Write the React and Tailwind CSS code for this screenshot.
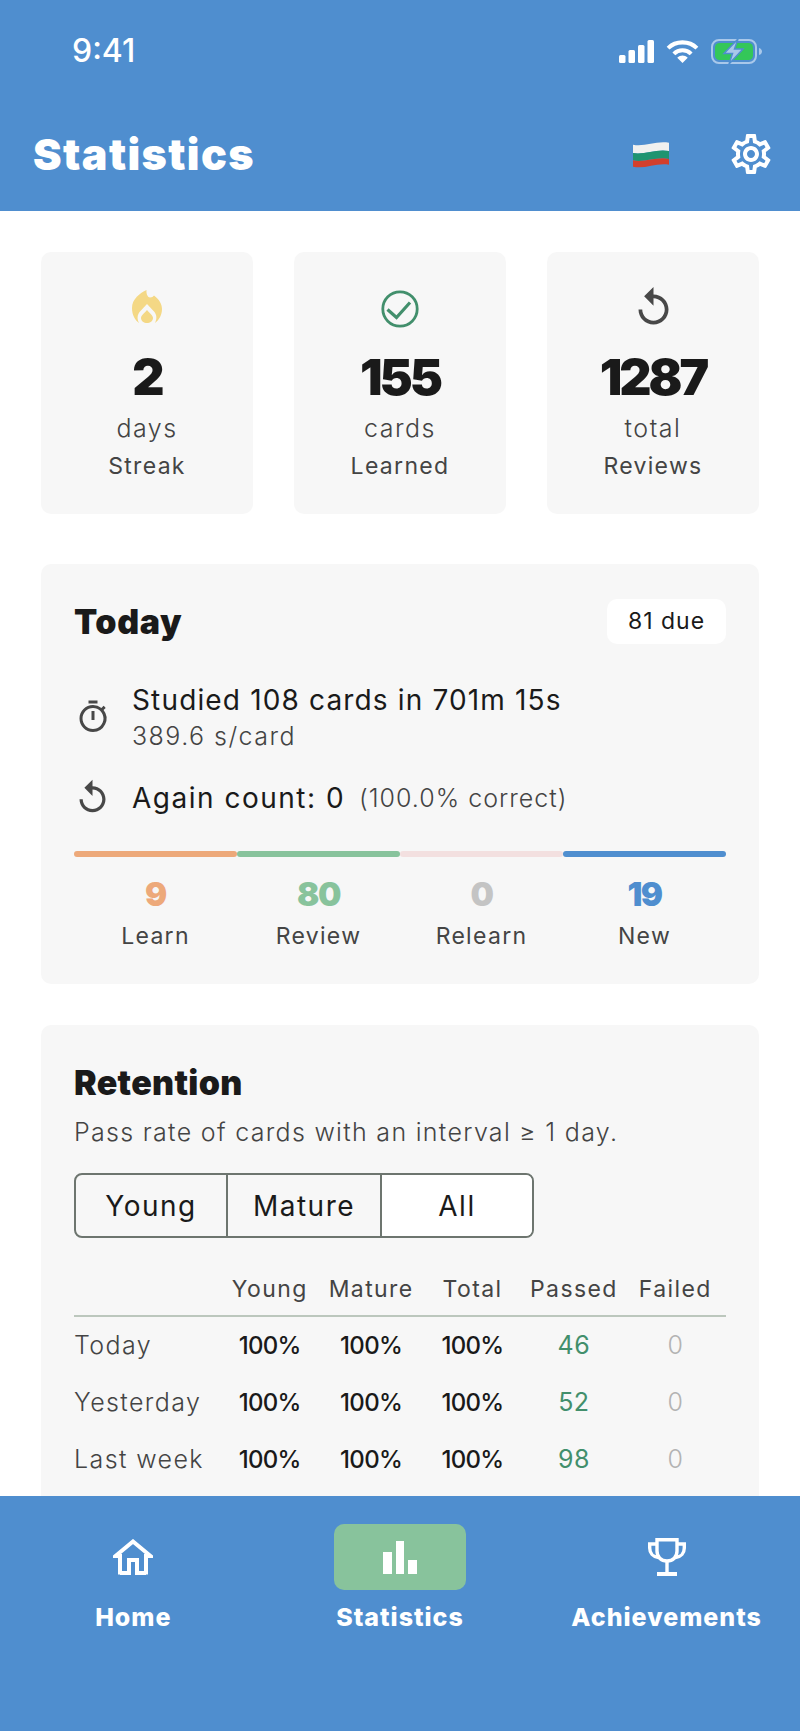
import { MdOutlineSettings, MdOutlineTimer, MdReplay } from 'react-icons/md';

const font = { fontFamily: 'Inter, "Noto Sans", sans-serif' };

const FlameIcon = () => (
  <svg className="-translate-y-[3px]" width="30" height="33" viewBox="0 0 30 33" fill="#f4d885">
    <path d="M14.5 0C14 4 16 7.5 18 7.5C20 7.5 21 6.5 22 5.5C27 9 30 14 30 19C30 25 27 30 23 33C25 29 25 25 22 21.5L15 14L8 21.5C5 25 5 29 7 33C3 30 0 25 0 18C0 9 8 3 14.5 0Z" />
    <path d="M15 20C17 23 21 25 21 28C21 31 18 33 15 33C12 33 9 31 9 28C9 25 13 23 15 20Z" />
  </svg>
);

const CheckIcon = () => (
  <svg width="38" height="38" viewBox="0 0 38 38" fill="none" stroke="#428f6c">
    <circle cx="19" cy="19" r="17.2" strokeWidth="2.8" />
    <path d="M6.5 19.5L15.5 27.5L29 12.5" strokeWidth="3.2" />
  </svg>
);

const SignalIcon = () => (
  <svg width="35" height="23" viewBox="0 0 35 23" fill="#fff">
    <rect x="0" y="15" width="6.5" height="8" rx="1.5" />
    <rect x="9.5" y="10" width="6.5" height="13" rx="1.5" />
    <rect x="19" y="5" width="6.5" height="18" rx="1.5" />
    <rect x="28.5" y="0" width="6.5" height="23" rx="1.5" />
  </svg>
);

const WifiIcon = () => (
  <svg width="33" height="24" viewBox="0 0 34 25" fill="none" stroke="#fff" strokeWidth="4.2">
    <path d="M2 9.5C10 1.5 24 1.5 32 9.5" />
    <path d="M8 15.5C13 10.5 21 10.5 26 15.5" />
    <path d="M11.5 19.5L17 25L22.5 19.5C19 16.5 15 16.5 11.5 19.5Z" fill="#fff" stroke="none" />
  </svg>
);

const BatteryIcon = () => (
  <svg width="52" height="25" viewBox="0 0 52 25">
    <rect x="1" y="1" width="44" height="23" rx="7" fill="none" stroke="#a9c8ea" strokeWidth="2" />
    <rect x="4" y="4" width="38" height="17" rx="4.5" fill="#34c759" />
    <path d="M48 9C50 9.5 51 11 51 12.5C51 14 50 15.5 48 16Z" fill="#a9c8ea" />
    <path d="M27 0L13 14.5H21.5L18 25L32 10H23.5Z" fill="#a9c8ea" stroke="#4f8ecf" strokeWidth="1.5" />
  </svg>
);

const FlagIcon = () => (
  <svg width="36" height="27" viewBox="0 0 37 27">
    <path d="M0 3.5C12 6 24 -1 37 1.5V10C24 7.5 12 14 0 12Z" fill="#f1f1ef" />
    <path d="M0 12C12 14 24 7.5 37 10V18C24 15.5 12 22 0 19.5Z" fill="#1f9470" />
    <path d="M0 19.5C12 22 24 15.5 37 18V24C24 21.5 12 29 0 26Z" fill="#d33f2c" />
  </svg>
);

const HomeIcon = () => (
  <svg width="40" height="36" viewBox="0 0 40 36" fill="none" stroke="#fff" strokeWidth="4">
    <path d="M7 34H16V21H24V34H33" />
    <path d="M7 35.5V17H2.5L20 2.5L37.5 17H33V35.5" />
  </svg>
);

const ChartIcon = () => (
  <svg width="34" height="33" viewBox="0 0 34 33" fill="#fff">
    <rect x="0" y="11" width="9" height="22" />
    <rect x="13" y="0" width="8" height="33" />
    <rect x="25" y="19" width="9" height="14" />
  </svg>
);

const TrophyIcon = () => (
  <svg width="38" height="38" viewBox="0 0 38 38" fill="none" stroke="#fff" strokeWidth="3.4">
    <path d="M9 1.7H29V13C29 19 25 23 19 23C13 23 9 19 9 13Z" />
    <path d="M9 6H1.7V10C1.7 15 5 19 10.5 19.5" />
    <path d="M29 6H36.3V10C36.3 15 33 19 27.5 19.5" />
    <path d="M19 23V35" />
    <path d="M9 36H29" strokeWidth="4" />
  </svg>
);

const stats = [
  { icon: <FlameIcon />, value: '2', unit: 'days', label: 'Streak' },
  { icon: <CheckIcon />, value: '155', unit: 'cards', label: 'Learned' },
  { icon: <MdReplay size={45} color="#484848" className="-translate-y-[2px]" />, value: '1287', unit: 'total', label: 'Reviews' },
];

const counts = [
  { value: '9', label: 'Learn', text: 'text-[#eda97a]', bar: 'bg-[#eda97a]' },
  { value: '80', label: 'Review', text: 'text-[#88c39c]', bar: 'bg-[#88c39c]' },
  { value: '0', label: 'Relearn', text: 'text-[#c4c4c4]', bar: 'bg-[#f3e0e0]' },
  { value: '19', label: 'New', text: 'text-[#4f8ecf]', bar: 'bg-[#4f8ecf]' },
];

const rows = [
  { label: 'Today', passed: '46' },
  { label: 'Yesterday', passed: '52' },
  { label: 'Last week', passed: '98' },
];

const App = () => {
  return (
    <div style={font} className="w-[800px] h-[1731px] flex flex-col overflow-hidden bg-white text-[#1a1a1a]">
      <header className="bg-[#4f8ecf] h-[211px] shrink-0 text-white">
        <div className="flex items-center justify-between h-[102px] pl-[72px] pr-[37px]">
          <span className="text-[32px] font-medium">9:41</span>
          <div className="flex items-center gap-[12px]">
            <SignalIcon />
            <WifiIcon />
            <BatteryIcon />
          </div>
        </div>
        <div className="flex items-center justify-between pl-[33px] pr-[25px] h-[54px] mt-[25px]">
          <h1 className="text-[43px] font-black tracking-[1.4px]">Statistics</h1>
          <div className="flex items-center gap-[58px]">
            <FlagIcon />
            <MdOutlineSettings size={48} color="#fff" />
          </div>
        </div>
      </header>

      <main className="flex-1 overflow-hidden px-[41px] pt-[41px]">
        <div className="grid grid-cols-3 gap-[41px]">
          {stats.map((stat) => (
            <div key={stat.label} className="bg-[#f7f7f7] rounded-[10px] h-[262px] flex flex-col items-center pt-[34px]">
              <div className="h-[46px] flex items-center justify-center">{stat.icon}</div>
              <div className="text-[50px] leading-[60px] font-black tracking-[-3px] mt-[15px]">{stat.value}</div>
              <div className="text-[25px] leading-[34px] font-light tracking-[1.5px] text-[#444] mt-[4px]">{stat.unit}</div>
              <div className="text-[23px] leading-[30px] tracking-[1.3px] text-[#444] mt-[6px]">{stat.label}</div>
            </div>
          ))}
        </div>

        <section className="bg-[#f7f7f7] rounded-[10px] h-[420px] mt-[50px] px-[33px] pt-[32px]">
          <div className="flex items-center justify-between">
            <h2 className="text-[34px] font-black tracking-[0.6px]">Today</h2>
            <span className="bg-white rounded-[10px] w-[119px] h-[45px] flex items-center justify-center text-[23px] tracking-[1px]">81 due</span>
          </div>
          <div className="flex items-center gap-[21px] mt-[34px]">
            <MdOutlineTimer size={36} color="#484848" className="ml-[1px] shrink-0" />
            <div>
              <div className="text-[28px] leading-[38px] tracking-[1.15px]">Studied 108 cards in 701m 15s</div>
              <div className="text-[25px] leading-[34px] font-light tracking-[1.45px] text-[#444]">389.6 s/card</div>
            </div>
          </div>
          <div className="flex items-center gap-[14px] mt-[25px]">
            <MdReplay size={39} color="#484848" className="-ml-[1px] shrink-0" />
            <div className="flex items-center gap-[14px] ml-[6px]">
              <span className="text-[28px] leading-[38px] tracking-[1.5px]">Again count: 0</span>
              <span className="text-[25px] leading-[34px] font-light tracking-[1px] text-[#444]">(100.0% correct)</span>
            </div>
          </div>
          <div className="grid grid-cols-4 mt-[34px]">
            {counts.map((count) => (
              <div key={count.label} className="flex flex-col items-center">
                <div className={`${count.bar} h-[6px] w-full rounded-full`} />
                <div className={`${count.text} text-[33px] leading-[40px] font-black tracking-[-1.5px] mt-[17px]`}>{count.value}</div>
                <div className="text-[23px] leading-[30px] tracking-[1.3px] text-[#444] mt-[7px]">{count.label}</div>
              </div>
            ))}
          </div>
        </section>

        <section className="bg-[#f7f7f7] rounded-t-[10px] mt-[41px] px-[33px] pt-[36px] pb-[40px]">
          <h2 className="text-[34px] leading-[44px] font-black tracking-[0.3px]">Retention</h2>
          <p className="text-[25px] leading-[34px] font-light tracking-[1.3px] text-[#444] mt-[10px]">Pass rate of cards with an interval ≥ 1 day.</p>
          <div className="flex w-[460px] h-[65px] border-2 border-[#6d756f] rounded-[8px] overflow-hidden mt-[24px] text-[28px] tracking-[1.5px]">
            <div className="w-[152px] flex items-center justify-center border-r-2 border-[#6d756f]">Young</div>
            <div className="w-[154px] flex items-center justify-center border-r-2 border-[#6d756f]">Mature</div>
            <div className="flex-1 flex items-center justify-center bg-white">All</div>
          </div>
          <div className="grid grid-cols-[145px_repeat(5,1fr)] h-[50px] items-center text-center text-[23px] tracking-[1.4px] text-[#444] border-b-2 border-[#bcc7bd] mt-[29px] pb-[3px]">
            <span />
            <span>Young</span>
            <span>Mature</span>
            <span>Total</span>
            <span>Passed</span>
            <span>Failed</span>
          </div>
          {rows.map((row) => (
            <div key={row.label} className="grid grid-cols-[145px_repeat(5,1fr)] h-[57px] items-center text-center text-[25px]">
              <span className="text-left font-light tracking-[1.4px] text-[#444] whitespace-nowrap">{row.label}</span>
              <span className="font-medium text-[24px] tracking-[-0.7px]">100%</span>
              <span className="font-medium text-[24px] tracking-[-0.7px]">100%</span>
              <span className="font-medium text-[24px] tracking-[-0.7px]">100%</span>
              <span className="text-[#428f6c] tracking-[0.5px]">{row.passed}</span>
              <span className="text-[#b3b3b3] font-light">0</span>
            </div>
          ))}
        </section>
      </main>

      <nav className="bg-[#4f8ecf] h-[235px] shrink-0 grid grid-cols-3 text-white pt-[28px]">
        <div className="flex flex-col items-center">
          <div className="h-[66px] flex items-center justify-center"><HomeIcon /></div>
          <span className="text-[25px] leading-[32px] font-extrabold tracking-[1px] mt-[11px]">Home</span>
        </div>
        <div className="flex flex-col items-center">
          <div className="w-[132px] h-[66px] rounded-[10px] bg-[#88c39c] flex items-center justify-center"><ChartIcon /></div>
          <span className="text-[25px] leading-[32px] font-extrabold tracking-[1px] mt-[11px]">Statistics</span>
        </div>
        <div className="flex flex-col items-center">
          <div className="h-[66px] flex items-center justify-center"><TrophyIcon /></div>
          <span className="text-[25px] leading-[32px] font-extrabold tracking-[1px] mt-[11px] whitespace-nowrap">Achievements</span>
        </div>
      </nav>
    </div>
  );
};

export default App;
